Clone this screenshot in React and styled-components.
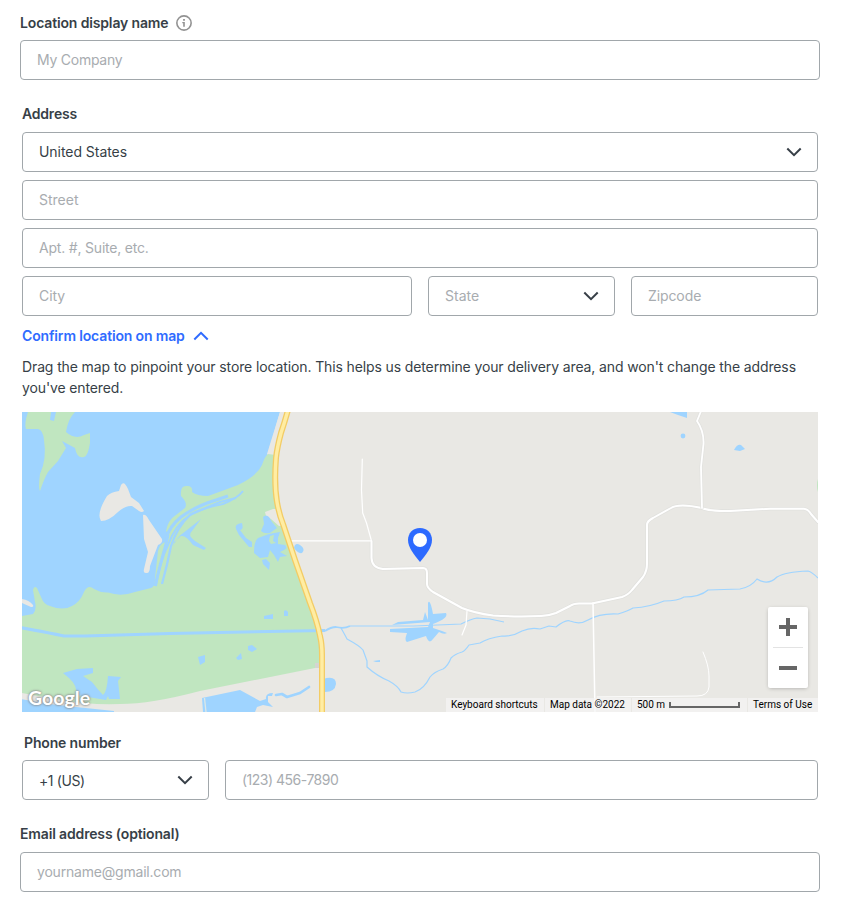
import React from "react";
import styled, { createGlobalStyle } from "styled-components";

const GlobalStyle = createGlobalStyle`
  *, *::before, *::after { box-sizing: border-box; }
  body { margin: 0; background: #fff; font-family: Inter, "Liberation Sans", sans-serif; color: #343a40; }
`;

const Page = styled.main`
  width: 849px;
  height: 913px;
  padding: 12px 29px 0 20px;
  display: flex;
  flex-direction: column;
  background: #fff;
  overflow: hidden;
`;

const Section = styled.section`
  display: flex;
  flex-direction: column;
  padding: 0 ${(p) => p.$inset || 0}px;
  margin-top: ${(p) => p.$top || 0}px;
`;

const Label = styled.label`
  display: flex;
  align-items: center;
  gap: 7px;
  height: 22px;
  margin: 0 0 ${(p) => p.$gap}px ${(p) => p.$indent || 0}px;
  font-size: 14px;
  font-weight: 600;
  letter-spacing: ${(p) => p.$track}px;
  line-height: 22px;
  color: #373f47;
`;

const Stack = styled.div`
  display: flex;
  flex-direction: column;
  gap: 8px;
`;

const FieldRow = styled.div`
  display: grid;
  grid-template-columns: ${(p) => p.$columns};
  gap: 16px;
`;

const Input = styled.input`
  width: 100%;
  min-width: 0;
  height: 40px;
  padding: 0 16px 2px;
  border: 1px solid #a1a7ab;
  border-radius: 4px;
  background: #fff;
  font: 400 14px Inter, sans-serif;
  letter-spacing: ${(p) => p.$track}px;
  color: #373f47;
  outline: none;
  &::placeholder { color: #a8acb0; opacity: 1; }
`;

const SelectBox = styled.button`
  display: flex;
  align-items: center;
  justify-content: space-between;
  height: 40px;
  padding: 0 15px 0 16px;
  border: 1px solid #a1a7ab;
  border-radius: 4px;
  background: #fff;
  font: 400 14px Inter, sans-serif;
  letter-spacing: ${(p) => p.$track}px;
  color: ${(p) => (p.$muted ? "#a8acb0" : "#373f47")};
`;

const SelectValue = styled.span`
  padding-bottom: ${(p) => (p.$low ? 0 : 2)}px;
`;

const MapToggle = styled.button`
  display: flex;
  align-items: center;
  gap: 8px;
  height: 20px;
  margin-top: 10px;
  padding: 0;
  border: 0;
  background: none;
  color: #2f6bff;
  font: 600 14px Inter, sans-serif;
  letter-spacing: -0.15px;
`;

const ToggleText = styled.span`
  padding-bottom: 2px;
`;

const Help = styled.p`
  margin: 10px 0 14px;
  font-size: 14px;
  line-height: 21px;
  letter-spacing: -0.122px;
  white-space: nowrap;
  color: #373f47;
`;

const MapFrame = styled.div`
  position: relative;
  height: 300px;
  overflow: hidden;
  background: #e9e8e4;
  & > svg { display: block; }
`;

const Brand = styled.span`
  position: absolute;
  left: 6px;
  bottom: 2px;
  font: 700 19.5px/24px Lato, sans-serif;
  letter-spacing: 0.05px;
  color: #fff;
  text-shadow: 0 0 2px #777, 0 0 3px #999;
`;

const Credits = styled.div`
  position: absolute;
  right: 0;
  bottom: 0;
  display: flex;
  gap: 1px;
  height: 14px;
  font: 400 10px/14px Roboto, sans-serif;
  color: #000;
`;

const Credit = styled.span`
  display: flex;
  align-items: center;
  gap: 4px;
  width: ${(p) => p.$width}px;
  padding-left: 5px;
  background: rgba(245, 245, 245, 0.7);
  white-space: nowrap;
`;

const ScaleBar = styled.i`
  width: 71px;
  height: 6px;
  border: 2px solid #666;
  border-top: 0;
`;

const ZoomPanel = styled.div`
  position: absolute;
  right: 10px;
  top: 195px;
  width: 40px;
  display: flex;
  flex-direction: column;
  align-items: center;
  background: #fff;
  border-radius: 2px;
  box-shadow: 0 1px 4px -1px rgba(0, 0, 0, 0.3);
`;

const ZoomButton = styled.button`
  display: grid;
  place-items: center;
  width: 40px;
  height: 40px;
  padding: 0;
  border: 0;
  background: none;
`;

const Divider = styled.hr`
  width: 30px;
  height: 1px;
  margin: 0;
  border: 0;
  background: #e3e3e3;
`;

const Water = styled.path`
  fill: #9fd4ff;
`;
const Green = styled.path`
  fill: #c0e6c0;
`;
const Land = styled.path`
  fill: #e9e8e4;
`;
const Stream = styled.path`
  fill: none;
  stroke: #9fd4ff;
  stroke-width: ${(p) => p.$w};
  stroke-linejoin: round;
`;
const Road = styled.path`
  fill: none;
  stroke: ${(p) => p.$c || "#fff"};
  stroke-width: ${(p) => p.$w || 2};
  stroke-linejoin: round;
  stroke-linecap: round;
`;

const HIGHWAY =
  "M288 410Q285 421 281 433Q277 448 276 458Q274 484 277 502Q279 514 283 524L295 560L310 603Q317 621 320 636Q322 644 322 655V714";
const MAIN_ROAD =
  "M371.5 541V558Q372 568 383 569L423 568Q427 568 427 573V584Q427 588 433 592L462 608Q474 613 493 615.5Q516 617 541 616Q548 616 556 613L570 606Q574 603 581 603.5H592L622 597Q628 595 632 590L643 577Q647 571 647 564V525Q647 521 653 518L671 508Q679 503 702 508Q708 511 730 511L770 508.7H804Q808 509 811 514L818 522";

function Chevron({ up }) {
  return (
    <svg width="16" height="10" viewBox="0 0 16 10" fill="none" stroke="currentColor" strokeWidth="2" color={up ? "#2f6bff" : "#373f47"}>
      <path d={up ? "M1.3 8.5L8 1.8L14.7 8.5" : "M1.3 1.5L8 8.2L14.7 1.5"} />
    </svg>
  );
}

function Select({ children, $low, ...rest }) {
  return (
    <SelectBox type="button" {...rest}>
      <SelectValue $low={$low}>{children}</SelectValue>
      <Chevron />
    </SelectBox>
  );
}

function InfoIcon() {
  return (
    <svg width="18" height="18" viewBox="0 0 18 18" fill="none">
      <circle cx="9" cy="9" r="7.15" stroke="#929292" strokeWidth="1.6" />
      <path d="M8.1 5h1.8v1.7H8.1zM7.3 8h2.5v4.7H8.2V9.2h-.9z" fill="#929292" />
    </svg>
  );
}

function Terrain() {
  return (
    <svg width="796" height="300" viewBox="22 412 796 300">
      <Water d="M22 412H280L271 443L267 456L255 540L160 600L22 620Z" />
      <Land d="M280 412L271 441L267 454L275 456L290 412Z" />
      <Green d="M22 616L33 614Q37 609 35 602L33 590Q34 585 37 588L41 597Q44 605 50 606Q63 611 72 606Q80 602 84 592Q88 584 94 589Q101 593 108 592.5Q121 597 135 592L151 588Q155 587 155 578L158 551Q160 543 166 542L169 535L166 531Q168 520 176 515L185 508Q188 503 181 496Q180 486 186 486Q193 485 192 492Q197 496 208 496Q222 491 238 485Q257 476 262 465Q265 456 268 454L276 455V500L296 560L320 635V667L315 668L200 691Q151 704 120 704Q88 705 60 700L22 693Z" />
      <Green d="M27 412H75Q68 419 66 432Q75 440 84 435L90 433V443Q88 456 84 457Q77 459 75 448L62 441L66 448L58 461L48 472Q44 479 40 491Q38 489 40 474Q47 459 44 440Q43 430 38 429L26 429Q24 424 28 412Z" />
      <Water d="M51 412H56L54 421L50 420Z" />
      <Land d="M22 599Q29 600 33 605Q34 607 31 607L22 603Z" />
      <Land d="M101 521Q96 514 107 496Q111 492 119 491L121 485Q124 480 128 489L131 497L139 503L144 511Q142 513 139 511L132 506Q126 505 118 512Q109 521 101 521Z" />
      <Land d="M143 515Q146 514 149 520L162 539Q163 543 158 545L150 566Q150 574 146 573Q143 573 144 569L148 552L144 539Z" />
      <Stream $w="3" d="M166 538Q170 526 181 517Q196 506 216 500L228 496" />
      <Stream $w="2" d="M156 586Q160 561 168 545Q175 525 190 515Q205 507 223 504Q238 498 243 491" />
      <Stream $w="2.3" d="M162 584Q167 566 171 546Q177 527 191 514L220 502L236 498" />
      <Water d="M173 548Q174 539 187 530L201 519L192 531Q187 535 195 541L206 548L204 550L193 545Q186 535 181 536L174 542Z" />
      <Stream $w="3" d="M155 586Q160 565 166 544L168 535" />
      <Land d="M265 512L273 509L277 509L284 526L279 526L271 519L266 516Z" />
      <Water d="M263 517Q266 514 269 517L272 522L277 528L270 533Q264 534 261 531L264 524Z" />
      <Water d="M236 529Q234 524 242 523Q244 530 240 530L246 538L252 542V547L249 547L239 535Z" />
      <Water d="M254 553Q254 541 258 538L269 534L280 532L278 538V544L285 545Q288 548 284 550L280 552L287 556L280 557L278 562L274 555L270 550L268 557L260 558Z" />
      <Green d="M270 536L274 535L273 541L276 543L271 544L269 541Z" />
      <Water d="M262 560L266 559L270 563L269 570L267 568L263 564Z" />
      <Water d="M294 548Q295 542 300 545Q306 549 302 553Q298 554 294 548Z" />
      <Stream $w="3" d="M20 627.5Q50 633 64 636L85 636L170 633.5L325 630.5" />
      <Stream $w="1.8" d="M325 631Q331 627 336 627Q344 629 350 626" />
      <Stream $w="1.2" d="M350 626H380L414 626L461 624Q471 619 477 618L490 619L504 622" />
      <Stream $w="1.2" d="M341 628Q345 635 347 639Q360 646 363 650L367 661V667Q377 676 389 681Q398 686 401 692Q407 694 415 692Q424 689 430 677Q434 672 443 669Q448 666 451 658Q455 654 462 652Q465 651 469 645L480 643Q488 638 502 636Q512 637 522 631Q531 627 540 629L549 626L556 627Q566 619 570 621Q580 625 588 620Q600 613 618 614Q628 611 633 608Q650 607 664 601Q678 601 684 597Q700 597 708 590L740 589Q751 587 757 579Q768 586 777 577Q785 572 808 571Q812 572 818 578" />
      <Water d="M392 625L398 622L423 620L425 612L428 620V603Q430 598 433 614L446 613Q449 618 433 624L433 628L442 631L447 633Q444 635 439 632L433 639Q429 645 426 636L407 642Q404 641 407 633L390 632V629L428 627L430 622Z" />
      <Water d="M373 661L380 660L380 662L376 662Z" />
      <Water d="M264 616L273 614V619H264Z" />
      <Water d="M284 611Q286 609 288 612V616H284Z" />
      <Water d="M248 646L252 645L257 649L252 652L248 650Z" />
      <Water d="M236 658L241 653L242 659L238 660Z" />
      <Water d="M198 657L205 655V662L200 665Z" />
      <Water d="M63 673L77 669L93 668V673L83 676L92 682Q98 690 103 695Q107 692 108 676L121 677L118 681L120 699H109L108 696L106 700L76 695Q78 686 69 678Z" />
      <Water d="M20 699L49 704L76 707L114 711V714H20Z" />
      <Water d="M202 698L240 690L260 701L266 699Q265 693 273 693L272 696H268V702L273 707L263 705L257 707L255 712H203Z" />
      <path d="M204.5 698L206 712" stroke="#dce8e8" strokeWidth="1.3" />
      <Stream $w="2.7" strokeLinecap="round" d="M276 695L282 694L287 697L300 693L309 687" />
      <Water d="M323 679Q336 675 336 684Q335 692 325 692Z" />
      <rect x="315" y="663" width="5" height="5" fill="#d4d5d1" />
      <Water d="M670 412H687V418L678 415Z" />
      <circle cx="683" cy="436" r="2.4" fill="#9fd4ff" />
      <Water d="M734 450Q737 444 741 445L745 449L740 451Z" />
      <Green d="M818 479Q816 485 818 492Z" />
      <Road $w="3.6" $c="#e1e1de" d={MAIN_ROAD} />
      <Road $w="2" d={MAIN_ROAD} />
      <Road $w="1.2" d="M362.3 459L361.5 490L362.7 513L366.5 523L371.5 541" />
      <Road $w="1.2" d="M290 540.8H371" />
      <Road $w="3.2" $c="#e1e1de" d="M700.7 412L697 421Q704 431 703.5 444L701 467L702 508" />
      <Road $w="1.8" d="M700.7 412L697 421Q704 431 703.5 444L701 467L702 508" />
      <Road $w="1.5" d="M593 603L595 712" />
      <Road $w="1" d="M703 652Q709 666 709 676V687Q708 696 697 696L597 697" />
      <Road $w="1.2" d="M467 611L466 625L462 635" />
      <Road $c="#f3cc65" $w="6" d={HIGHWAY} />
      <Road $c="#ffeda3" $w="3.4" d={HIGHWAY} />
      <path d="M420 528C412.5 528 408 533.5 408 540C408 547 414 555 420 562C426 555 432 547 432 540C432 533.5 427.5 528 420 528Z" fill="#2d6aff" />
      <circle cx="420" cy="540" r="7" fill="#fff" />
    </svg>
  );
}

export default function App() {
  return (
    <>
      <GlobalStyle />
      <Page>
        <Section>
          <Label $gap={6} $track={-0.15}>Location display name <InfoIcon /></Label>
          <Input placeholder="My Company" $track={-0.25} />
        </Section>
        <Section $inset={2} $top={23}>
          <Label $gap={7} $track={-0.2}>Address</Label>
          <Stack>
            <Select $track={-0.05}>United States</Select>
            <Input placeholder="Street" $track={0} />
            <Input placeholder="Apt. #, Suite, etc." $track={-0.2} />
            <FieldRow $columns="390px 187px 187px">
              <Input placeholder="City" $track={-0.1} />
              <Select $muted $track={0}>State</Select>
              <Input placeholder="Zipcode" $track={-0.1} />
            </FieldRow>
          </Stack>
          <MapToggle type="button"><ToggleText>Confirm location on map</ToggleText> <Chevron up /></MapToggle>
          <Help>
            Drag the map to pinpoint your store location. This helps us determine your delivery area, and won't change the address
            <br />
            you've entered.
          </Help>
          <MapFrame>
            <Terrain />
            <Brand>Google</Brand>
            <ZoomPanel>
              <ZoomButton aria-label="Zoom in">
                <svg width="18" height="18"><path d="M7 0h4v7h7v4h-7v7H7v-7H0V7h7z" fill="#666" /></svg>
              </ZoomButton>
              <Divider />
              <ZoomButton aria-label="Zoom out">
                <svg width="18" height="4"><path d="M0 0h18v4H0z" fill="#666" /></svg>
              </ZoomButton>
            </ZoomPanel>
            <Credits>
              <Credit $width={98}>Keyboard shortcuts</Credit>
              <Credit $width={86}>Map data ©2022</Credit>
              <Credit $width={115}>500 m <ScaleBar /></Credit>
              <Credit $width={70}>Terms of Use</Credit>
            </Credits>
          </MapFrame>
        </Section>
        <Section $inset={2} $top={20}>
          <Label $gap={6} $indent={2} $track={-0.15}>Phone number</Label>
          <FieldRow $columns="187px 593px">
            <Select $track={-0.4} $low>+1 (US)</Select>
            <Input placeholder="(123) 456-7890" $track={-0.5} />
          </FieldRow>
        </Section>
        <Section $top={23}>
          <Label $gap={7} $track={-0.15}>Email address (optional)</Label>
          <Input placeholder="yourname@gmail.com" $track={-0.2} />
        </Section>
      </Page>
    </>
  );
}
